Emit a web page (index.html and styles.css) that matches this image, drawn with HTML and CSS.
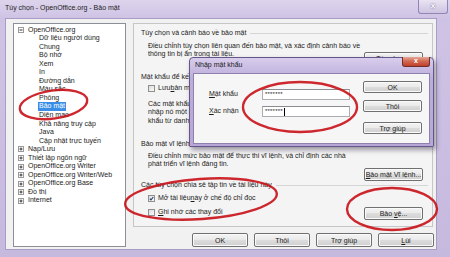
FILE: index.html
```html
<!DOCTYPE html>
<html lang="vi">
<head>
  <meta charset="UTF-8">
  <meta name="viewport" content="width=device-width, initial-scale=1.0">
  <title>Tùy chọn - OpenOffice.org - Bảo mật</title>
  <link rel="stylesheet" href="styles.css">
</head>
<body>
  <!-- cửa sổ Tùy chọn -->
  <div class="window">
    <div class="titlebar">
      <span class="title">Tùy chọn - OpenOffice.org - Bảo mật</span>
      <span class="close">x</span>
    </div>
    <div class="client">
      <!-- cây mục -->
      <ul class="tree">
        <li class="root"><svg class="box" viewBox="0 0 6 6"><rect x=".5" y=".5" width="5" height="5" fill="#fff" stroke="#9a9a9a"/><path d="M1.5 3h3" stroke="#333"/></svg>OpenOffice.org</li>
        <li class="child">Dữ liệu người dùng</li>
        <li class="child">Chung</li>
        <li class="child">Bộ nhớ</li>
        <li class="child">Xem</li>
        <li class="child">In</li>
        <li class="child">Đường dẫn</li>
        <li class="child">Màu sắc</li>
        <li class="child">Phông</li>
        <li class="child"><span class="sel">Bảo mật</span></li>
        <li class="child">Diện mạo</li>
        <li class="child">Khả năng truy cập</li>
        <li class="child">Java</li>
        <li class="child">Cập nhật trực tuyến</li>
        <li class="root"><svg class="box" viewBox="0 0 6 6"><rect x=".5" y=".5" width="5" height="5" fill="#fff" stroke="#9a9a9a"/><path d="M1.5 3h3M3 1.5v3" stroke="#333"/></svg>Nạp/Lưu</li>
        <li class="root"><svg class="box" viewBox="0 0 6 6"><rect x=".5" y=".5" width="5" height="5" fill="#fff" stroke="#9a9a9a"/><path d="M1.5 3h3M3 1.5v3" stroke="#333"/></svg>Thiết lập ngôn ngữ</li>
        <li class="root"><svg class="box" viewBox="0 0 6 6"><rect x=".5" y=".5" width="5" height="5" fill="#fff" stroke="#9a9a9a"/><path d="M1.5 3h3M3 1.5v3" stroke="#333"/></svg>OpenOffice.org Writer</li>
        <li class="root"><svg class="box" viewBox="0 0 6 6"><rect x=".5" y=".5" width="5" height="5" fill="#fff" stroke="#9a9a9a"/><path d="M1.5 3h3M3 1.5v3" stroke="#333"/></svg>OpenOffice.org Writer/Web</li>
        <li class="root"><svg class="box" viewBox="0 0 6 6"><rect x=".5" y=".5" width="5" height="5" fill="#fff" stroke="#9a9a9a"/><path d="M1.5 3h3M3 1.5v3" stroke="#333"/></svg>OpenOffice.org Base</li>
        <li class="root"><svg class="box" viewBox="0 0 6 6"><rect x=".5" y=".5" width="5" height="5" fill="#fff" stroke="#9a9a9a"/><path d="M1.5 3h3M3 1.5v3" stroke="#333"/></svg>Đồ thị</li>
        <li class="root"><svg class="box" viewBox="0 0 6 6"><rect x=".5" y=".5" width="5" height="5" fill="#fff" stroke="#9a9a9a"/><path d="M1.5 3h3M3 1.5v3" stroke="#333"/></svg>Internet</li>
      </ul>
      <!-- trang Bảo mật -->
      <div class="side">
        <div class="panel">
          <div class="legend l1">Tùy chọn và cảnh báo về bảo mật</div>
          <div class="row r1">
            <p class="desc">Điều chỉnh tùy chọn liên quan đến bảo mật, và xác định cảnh báo về<br>thông tin bị ẩn trong tài liệu.</p>
            <button class="btn b1">Tùy chọn...</button>
          </div>
          <!-- phần này bị hộp thoại che gần hết -->
          <div class="legend l2">Mật khẩu để kết nối</div>
          <label class="check c0"><i class="cb"></i>Lưu <u>b</u>ản mật</label>
          <p class="desc p2">Các mật khẩu được<br>nhập nó một lần<br>khẩu từ danh sách</p>
          <div class="legend l3">Bảo mật vĩ lệnh</div>
          <div class="row r3">
            <p class="desc">Điều chỉnh mức bảo mật để thực thi vĩ lệnh, và chỉ định các nhà<br>phát triển vĩ lệnh đáng tin.</p>
            <button class="btn b3"><u>B</u>ảo mật Vĩ lệnh...</button>
          </div>
          <div class="legend l4">Các tùy chọn chia sẻ tập tin về tài liệu này</div>
          <div class="row r4">
            <div class="checks">
              <label class="check"><i class="cb on"><svg viewBox="0 0 5 5"><path d="M.8 2.6l1.2 1.3L4.3 1" fill="none" stroke="#23407a" stroke-width="1.1"/></svg></i>Mở tài liệu <u>n</u>ày ở chế độ chỉ đọc</label>
              <label class="check c2"><i class="cb"></i><u>G</u>hi nhớ các thay đổi</label>
            </div>
            <button class="btn b4">Bảo <u>v</u>ệ...</button>
          </div>
        </div>
        <div class="actions">
          <button class="btn big">OK</button>
          <button class="btn big">Thôi</button>
          <button class="btn big">Trợ giúp</button>
          <button class="btn big"><u>L</u>ùi</button>
        </div>
      </div>
    </div>
  </div>

  <!-- hộp thoại Nhập mật khẩu -->
  <div class="dialog">
    <div class="dtitle">
      <span>Nhập mật khẩu</span>
      <span class="dclose">x</span>
    </div>
    <div class="dbody">
      <div class="fields">
        <div class="field"><span class="lab"><u>M</u>ật khẩu</span><span class="input">*******</span></div>
        <div class="field"><span class="lab"><u>X</u>ác nhận</span><span class="input">*******<i class="caret"></i></span></div>
      </div>
      <div class="dbtns">
        <button class="btn">OK</button>
        <button class="btn">Thôi</button>
        <button class="btn help">Trợ giúp</button>
      </div>
    </div>
  </div>

  <!-- vòng khoanh đỏ -->
  <svg class="marks" width="450" height="257" viewBox="0 0 450 257">
    <g fill="none" stroke="#c9151c" stroke-width="2.4" opacity=".92">
      <ellipse cx="53.5" cy="104.5" rx="34" ry="14" transform="rotate(-8 53.5 104.5)"/>
      <ellipse cx="300" cy="107" rx="57" ry="25"/>
      <ellipse cx="201" cy="199" rx="76" ry="20" transform="rotate(-4 201 199)"/>
      <ellipse cx="392" cy="209" rx="45" ry="21"/>
    </g>
  </svg>
</body>
</html>
```

FILE: styles.css
```css
/* reset */
* {
  margin: 0;
  padding: 0;
  box-sizing: border-box;
}
ul {
  list-style: none;
}
html, body {
  width: 450px;
  height: 257px;
  overflow: hidden;
}
body {
  position: relative;
  font: 7px/8.5px "Liberation Sans", "Noto Sans", sans-serif;
  color: #1b1b1b;
  background: #c4b7dd;
}
button {
  font: inherit;
  color: inherit;
}
u {
  text-decoration: underline;
  text-underline-offset: 1px;
}

/* window */
.window {
  display: flex;
  flex-direction: column;
  width: 450px;
  height: 257px;
  background: linear-gradient(#ddd4ec, #cfc3e5 18px, #c6b9de);
}
.titlebar {
  display: flex;
  align-items: flex-start;
  height: 18px;
  padding-left: 5px;
}
.title {
  line-height: 16px;
  color: #222;
}
.close {
  margin-left: auto;
  margin-right: 2px;
  width: 30px;
  height: 14px;
  border: 1px solid #9384b4;
  border-top: 0;
  border-radius: 0 0 3px 3px;
  background: linear-gradient(#e9e4f2, #cdc3e2);
  color: #fff;
  font-weight: bold;
  font-size: 8px;
  line-height: 12px;
  text-align: center;
  text-shadow: 0 0 2px #4d4070;
}
.client {
  display: flex;
  gap: 7px;
  height: 232px;
  margin: 0 13px 0 5px;
  padding: 5px 2px 0 7px;
  background: #f1f1f1;
  border: 1px solid #a99dc7;
}

/* tree */
.tree {
  flex: none;
  width: 113px;
  height: 224px;
  margin-top: -1px;
  padding-top: 1.5px;
  background: #fff;
  border: 1px solid #8c8f96;
}
.tree li {
  display: flex;
  align-items: center;
  height: 8.55px;
  white-space: nowrap;
}
.tree .root {
  padding-left: 4px;
}
.tree .child {
  padding-left: 25px;
}
.tree .box {
  width: 6px;
  height: 6px;
  margin-right: 4px;
}
.tree .sel {
  padding: 0 1px;
  margin-left: -1px;
  background: #3a8ee6;
  color: #fff;
}

/* right side */
.side {
  display: flex;
  flex-direction: column;
  width: 303px;
  margin-top: -1px;
}
.panel {
  width: 300px;
  height: 204px;
  padding: 0 4px 0 7px;
  border: 1px solid #c6c6c6;
  background: #f4f4f4;
}
.legend {
  display: flex;
  align-items: center;
  height: 8.5px;
  white-space: nowrap;
}
.legend::after {
  content: "";
  flex: 1;
  height: 1px;
  margin-left: 4px;
  background: #d5d5d5;
}
.desc {
  margin-left: 7px;
  white-space: nowrap;
}
.row {
  display: flex;
  justify-content: space-between;
  align-items: flex-start;
}
.l1 { margin-top: 5px; }
.r1 { margin-top: 4px; }
.l2 { margin-top: 7.75px; }
.c0 { margin-top: 2.5px; }
.p2 { margin-top: 7.5px; }
.l3 { margin-top: 14.5px; }
.r3 { margin-top: 3.5px; }
.l4 { margin-top: 0; }
.r4 { margin-top: 4.5px; }
.c2 { margin-top: 5.5px; }

.check {
  display: flex;
  align-items: center;
  height: 8.5px;
  margin-left: 7px;
  white-space: nowrap;
}
.cb {
  display: flex;
  align-items: center;
  justify-content: center;
  width: 7px;
  height: 7px;
  margin-right: 3px;
  border: 1px solid #8e8f8f;
  background: linear-gradient(135deg, #dcdcdc, #fbfbfb);
}
.cb svg {
  width: 5px;
  height: 5px;
}

/* buttons */
.btn {
  flex: none;
  width: 59px;
  height: 13px;
  border: 1px solid #707070;
  border-radius: 2px;
  background: linear-gradient(#f3f3f3, #ebebeb 45%, #dddddd 50%, #cfcfcf);
  box-shadow: inset 0 0 0 1px #fafafa;
  line-height: 10px;
  text-align: center;
}
.b1 { margin-top: 10.5px; margin-right: 5px; }
.b3 { margin-top: 16.25px; margin-right: 5px; }
.b4 { margin-top: 13px; margin-right: 5px; }
.actions {
  display: flex;
  justify-content: flex-end;
  gap: 6px;
  margin-top: 6px;
}
.big {
  width: 56px;
  height: 14px;
  line-height: 11px;
}

/* dialog */
.dialog {
  position: absolute;
  left: 189px;
  top: 57px;
  width: 245px;
  height: 90px;
  padding: 0 3px 3px;
  border: 1px solid #65558a;
  border-radius: 4px 4px 1px 1px;
  background: linear-gradient(#d8cdec, #bcaedb 20px, #b6a7d7);
  box-shadow: 2px 3px 5px rgba(40, 30, 60, 0.45);
}
.dtitle {
  display: flex;
  align-items: flex-start;
  height: 15px;
  padding-left: 2px;
}
.dtitle span {
  line-height: 14px;
}
.dclose {
  margin: -1px 0 0 auto;
  width: 28px;
  height: 10px;
  border: 1px solid #6f2f28;
  border-top: 0;
  border-radius: 0 0 3px 3px;
  background: linear-gradient(#e6a595, #d0664f 50%, #c0402a);
  color: #fff;
  font-weight: bold;
  font-size: 7px;
  line-height: 8px !important;
  text-align: center;
}
.dbody {
  display: flex;
  height: 71px;
  padding-left: 15px;
  background: #f6f6f6;
  border: 1px solid #8e81ae;
}
.fields {
  display: flex;
  flex-direction: column;
  gap: 6px;
  padding-top: 15px;
}
.field {
  display: flex;
  align-items: center;
  height: 11px;
}
.lab {
  width: 53px;
}
.input {
  display: flex;
  align-items: center;
  width: 88px;
  height: 11px;
  padding-left: 2px;
  border: 1px solid #abadb3;
  border-top-color: #8a8c92;
  background: #fff;
  font-size: 6px;
  letter-spacing: 0.2px;
}
.caret {
  width: 1px;
  height: 8px;
  margin-left: 1px;
  background: #000;
}
.dbtns {
  display: flex;
  flex-direction: column;
  gap: 7px;
  margin-left: 13px;
  padding-top: 7px;
}
.dbtns .btn {
  height: 12px;
  line-height: 9px;
}
.dbtns .help {
  margin-top: 3px;
}

/* annotation */
.marks {
  position: absolute;
  left: 0;
  top: 0;
  pointer-events: none;
}
```
